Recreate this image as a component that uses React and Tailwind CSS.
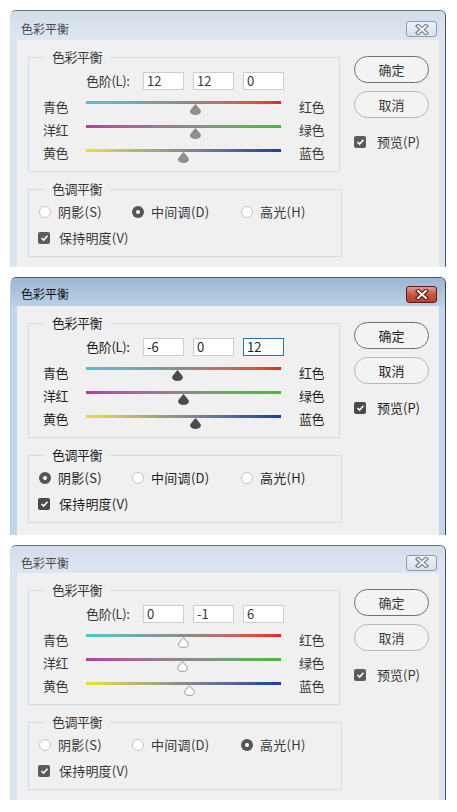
import React from "react";

const FONT = "font-['Noto_Sans_CJK_SC','Noto_Sans',sans-serif]";

function CloseX({ active }) {
  const d = "M4 2 L12 9 M12 2 L4 9";
  return (
    <svg width="16" height="11" viewBox="0 0 16 11">
      <path d={d} stroke={active ? "#4a1812" : "#6e7782"} strokeWidth="4.2" strokeLinecap="square" fill="none" />
      <path d={d} stroke={active ? "#ffffff" : "#f3f5f8"} strokeWidth="2" strokeLinecap="square" fill="none" />
    </svg>
  );
}

function Thumb({ variant }) {
  const fill = variant === "hollow" ? "#ffffff" : variant === "dark" ? "#4b4b4b" : "#8e8e8e";
  const stroke = variant === "hollow" ? "#8a8a8a" : variant === "dark" ? "#3d3d3d" : "#7f7f7f";
  return (
    <svg width="13" height="11" viewBox="0 0 13 11">
      <path
        d="M6.5 0.6 L10.4 5.2 C12.2 7.3 11.8 10.4 6.5 10.4 C1.2 10.4 0.8 7.3 2.6 5.2 Z"
        fill={fill}
        stroke={stroke}
        strokeWidth="0.9"
        strokeLinejoin="round"
      />
    </svg>
  );
}

function Check({ dark }) {
  return (
    <span
      className={`flex h-[12px] w-[12px] shrink-0 items-center justify-center rounded-[2px] ${
        dark ? "bg-[#4a4a4a]" : "bg-[#5c5c5c]"
      }`}
    >
      <svg width="9" height="8" viewBox="0 0 9 8">
        <path d="M1.5 4 L3.6 6 L7.5 1.8" fill="none" stroke="#ffffff" strokeWidth="1.6" />
      </svg>
    </span>
  );
}

function Radio({ on }) {
  return on ? (
    <span className="flex h-[12px] w-[12px] shrink-0 items-center justify-center rounded-full bg-[#555555]">
      <span className="h-[4px] w-[4px] rounded-full bg-white" />
    </span>
  ) : (
    <span className="h-[12px] w-[12px] shrink-0 rounded-full border border-[#c4c4c4] bg-white" />
  );
}

const ROWS = [
  { l: "青色", r: "红色", grad: "bg-linear-to-r from-[#45c6cf] via-[#8b8b8b] to-[#ec1b24]", pt: "pt-[2px]" },
  { l: "洋红", r: "绿色", grad: "bg-linear-to-r from-[#b13fa0] via-[#8b8b8b] to-[#48b83a]", pt: "pt-[1px]" },
  { l: "黄色", r: "蓝色", grad: "bg-linear-to-r from-[#e9e31c] via-[#8b8b8b] to-[#1d3d9f]", pt: "pt-0" },
];

const RADIOS = [
  { label: "阴影(S)", w: "w-[93px]" },
  { label: "中间调(D)", w: "w-[109px]" },
  { label: "高光(H)", w: "w-[100px]" },
];

function Dialog({ d }) {
  const text = d.active ? "text-[#1f1f1f]" : "text-[#383838]";
  return (
    <div
      className={`flex w-[436px] flex-col rounded-t-[6px] border-t border-r ${
        d.active
          ? "border-t-[#4b5663] border-r-[#3b4450] border-l border-l-[#b9cde4] bg-[#c3d6eb]"
          : "border-t-[#6a6f76] border-r-[#4d5259] border-l border-l-[#d3dfed] bg-[#dae5f1]"
      }`}
    >
      <div
        className={`flex items-center justify-between rounded-t-[5px] pl-[10px] pr-[8px] ${d.titleH} ${d.titlePt} ${
          d.active
            ? "bg-linear-to-b from-[#9cb6d3] to-[#bbd0e7] text-[#111111]"
            : "bg-linear-to-b from-[#d3dde8] to-[#dee7f1] text-[#4a4a4a]"
        }`}
      >
        <span className="text-[12px] leading-[16px]">色彩平衡</span>
        <span
          className={`flex w-[31px] items-center justify-center rounded-[3px] border ${d.closeH} ${
            d.active
              ? "border-[#5a1e18] bg-linear-to-b from-[#e39a8c] via-[#c9553f] to-[#b7412c]"
              : "border-[#8d9cae] bg-linear-to-b from-[#eef2f7] to-[#d8e0ea]"
          }`}
        >
          <CloseX active={d.active} />
        </span>
      </div>
      <div className="px-[6px]">
        <div className={`flex bg-[#f0f0f0] pl-[11px] pt-[8px] ${d.bodyH} ${text}`}>
          <div className="flex w-[312px] flex-col gap-[8px]">
            <fieldset className="border border-[#d5dde3] pb-[3px]">
              <legend className="ml-[15px] px-[8px] leading-[18px] tracking-[-0.5px]">色彩平衡</legend>
              <div className="mt-[6px] flex h-[18px] items-center pl-[57px]">
                <span className="w-[57px] tracking-[-0.3px]">色阶(L):</span>
                <div className="flex gap-[9px]">
                  {d.levels.map((v, i) => (
                    <div
                      key={i}
                      className={`flex h-[18px] w-[41px] items-center border bg-white pl-[3px] ${
                        i === d.focus ? "border-[#2c6fbd]" : "border-[#cdcdcd]"
                      }`}
                    >
                      {v}
                    </div>
                  ))}
                </div>
              </div>
              <div className="mt-[6px] flex flex-col">
                {ROWS.map((row, i) => (
                  <div key={i} className="flex h-[24px] pl-[14px]">
                    <span className={`w-[43px] tracking-[-0.5px] ${row.pt}`}>{row.l}</span>
                    <div className="relative w-[195px]">
                      <div className={`mt-[5px] h-[3px] ${row.grad}`} />
                      <span
                        className="absolute top-[8px] flex"
                        style={{ left: ((d.levels[i] + 100) / 200) * 195 - 6.5 }}
                      >
                        <Thumb variant={d.thumb} />
                      </span>
                    </div>
                    <span className={`ml-[18px] tracking-[-0.5px] ${row.pt}`}>{row.r}</span>
                  </div>
                ))}
              </div>
            </fieldset>
            <fieldset className="border border-[#d5dde3] pb-[9px]">
              <legend className="ml-[15px] px-[8px] leading-[18px] tracking-[-0.5px]">色调平衡</legend>
              <div className="mt-[5px] flex h-[18px] items-center pl-[10px]">
                {RADIOS.map((r, i) => (
                  <div key={i} className={`flex items-center gap-[7px] ${r.w}`}>
                    <Radio on={i === d.radio} />
                    <span className="tracking-[0.3px]">{r.label}</span>
                  </div>
                ))}
              </div>
              <div className="mt-[8px] flex h-[18px] items-center gap-[9px] pl-[9px]">
                <Check dark={d.active} />
                <span className="tracking-[0.2px]">保持明度(V)</span>
              </div>
            </fieldset>
          </div>
          <div className="ml-[14px] flex w-[75px] flex-col pt-[8px]">
            <div className="flex h-[27px] items-center justify-center rounded-full border border-[#6f6f6f] bg-[#f3f3f3]">
              确定
            </div>
            <div className="mt-[8px] flex h-[27px] items-center justify-center rounded-full border border-[#b7b7b7] bg-[#f3f3f3]">
              取消
            </div>
            <div className="mt-[15px] flex h-[18px] items-center gap-[11px]">
              <Check dark={d.active} />
              <span>预览(P)</span>
            </div>
          </div>
        </div>
      </div>
    </div>
  );
}

const DIALOGS = [
  { active: false, titleH: "h-[29px]", titlePt: "pt-[7px]", closeH: "h-[16px]", bodyH: "h-[227px]", levels: [12, 12, 0], focus: -1, thumb: "gray", radio: 1 },
  { active: true, titleH: "h-[28px]", titlePt: "pt-[4px]", closeH: "h-[17px]", bodyH: "h-[229px]", levels: [-6, 0, 12], focus: 2, thumb: "dark", radio: 0 },
  { active: false, titleH: "h-[27px]", titlePt: "pt-[6px]", closeH: "h-[16px]", bodyH: "h-[227px]", levels: [0, -1, 6], focus: -1, thumb: "hollow", radio: 2 },
];

export default function App() {
  return (
    <div className={`h-[812px] w-[457px] overflow-hidden bg-white text-[13px] leading-[18px] ${FONT}`}>
      <div className="flex flex-col gap-[10px] pl-[10px] pt-[10px]">
        {DIALOGS.map((d, i) => (
          <Dialog key={i} d={d} />
        ))}
      </div>
    </div>
  );
}
